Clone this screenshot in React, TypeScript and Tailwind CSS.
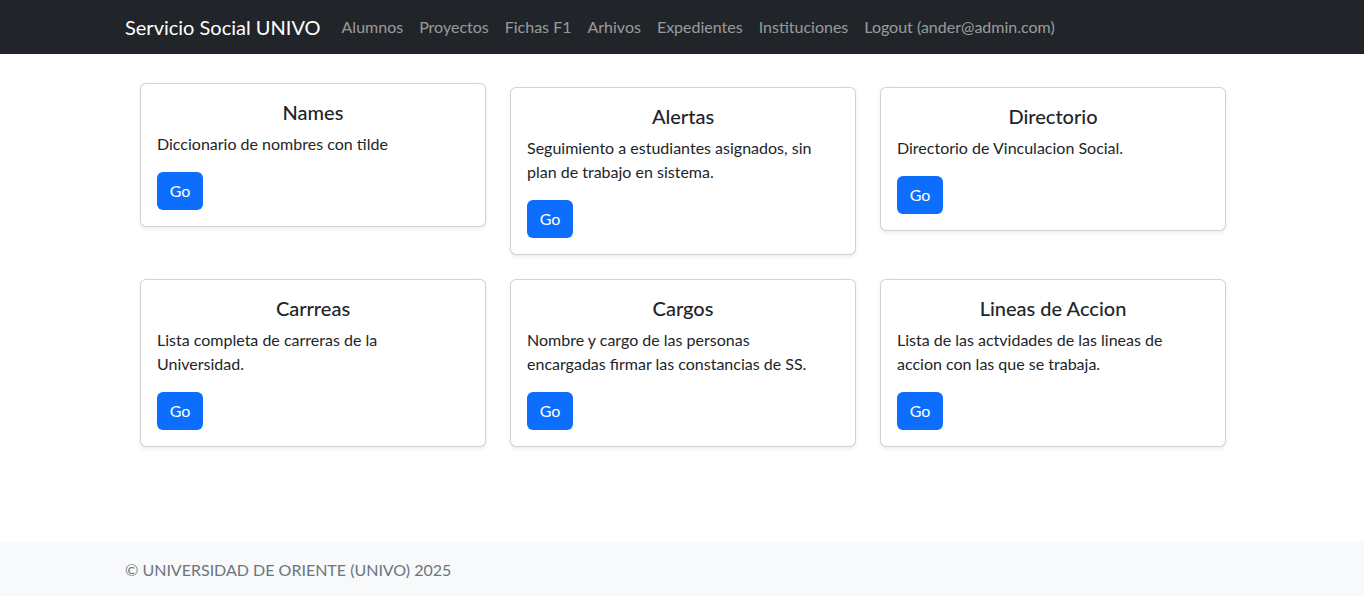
import React from "react";

const cards1 = [
  { title: "Names", lines: ["Diccionario de nombres con tilde"], top: "mt-0" },
  { title: "Alertas", lines: ["Seguimiento a estudiantes asignados, sin", "plan de trabajo en sistema."], top: "mt-1" },
  { title: "Directorio", lines: ["Directorio de Vinculacion Social."], top: "mt-1" },
];
const cards2 = [
  { title: "Carrreas", lines: ["Lista completa de carreras de la", "Universidad."] },
  { title: "Cargos", lines: ["Nombre y cargo de las personas", "encargadas firmar las constancias de SS."] },
  { title: "Lineas de Accion", lines: ["Lista de las actvidades de las lineas de", "accion con las que se trabaja."] },
];

function Card({ title, lines, cls = "" }: { title: string; lines: string[]; cls?: string }) {
  return (
    <div className={`rounded-[6px] border border-[rgba(0,0,0,0.175)] bg-white shadow-[0_2px_4px_rgba(0,0,0,0.075)] ${cls}`}>
      <div className="p-4">
        <h5 className="mb-2 text-center text-[20px] font-medium leading-[24px] text-[#212529]">{title}</h5>
        <p className="mb-4 text-[16px] leading-[24px] text-[#212529]">
          {lines.map((l, i) => (
            <React.Fragment key={i}>
              {i > 0 && <br />}
              {l}
            </React.Fragment>
          ))}
        </p>
        <button className="h-[38px] w-[46px] rounded-[6px] bg-[#0d6efd] text-[16px] leading-[24px] text-white">Go</button>
      </div>
    </div>
  );
}

export default function App() {
  const links = ["Alumnos", "Proyectos", "Fichas F1", "Arhivos", "Expedientes", "Instituciones", "Logout (ander@admin.com)"];
  return (
    <div className="flex min-h-screen flex-col bg-white font-['Lato','Noto_Sans',sans-serif] text-[#212529]">
      <nav className="h-[54px] bg-[#212529]">
        <div className="mx-auto flex h-full w-[1140px] items-center px-3">
          <span className="mr-[13px] pl-px text-[20px] leading-[30px] text-white">Servicio Social UNIVO</span>
          <div className="flex">
            {links.map((l) => (
              <span key={l} className="px-2 text-[16px] leading-[24px] text-[rgba(255,255,255,0.55)]">{l}</span>
            ))}
          </div>
        </div>
      </nav>
      <main className="mx-auto w-[1088px] pl-[2px] pt-[29px]">
        <div className="grid grid-cols-3 items-start gap-6">
          {cards1.map((c) => (
            <Card key={c.title} title={c.title} lines={c.lines} cls={c.top} />
          ))}
        </div>
        <div className="mt-[24px] grid grid-cols-3 gap-6">
          {cards2.map((c) => (
            <Card key={c.title} title={c.title} lines={c.lines} />
          ))}
        </div>
      </main>
      <footer className="mt-auto h-[54px] bg-[#f8f9fa]">
        <div className="mx-auto flex h-full w-[1140px] items-center px-3 pt-[2px]">
          <span className="pl-px text-[16px] leading-[24px] text-[#6c757d]">© UNIVERSIDAD DE ORIENTE (UNIVO) 2025</span>
        </div>
      </footer>
    </div>
  );
}
